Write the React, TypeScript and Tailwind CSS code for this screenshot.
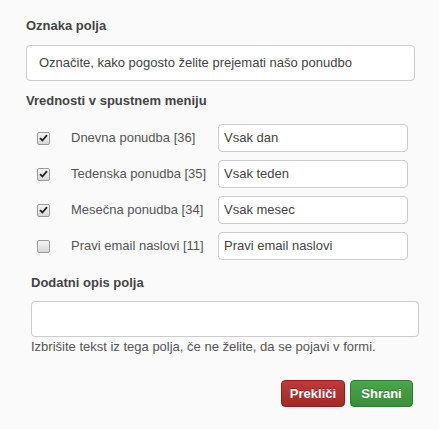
import React from "react";

const rows = [
  { label: "Dnevna ponudba [36]", value: "Vsak dan", checked: true },
  { label: "Tedenska ponudba [35]", value: "Vsak teden", checked: true },
  { label: "Mesečna ponudba [34]", value: "Vsak mesec", checked: true },
  { label: "Pravi email naslovi [11]", value: "Pravi email naslovi", checked: false },
];

function Check({ checked }: { checked: boolean }) {
  return (
    <span className="flex h-[13px] w-[13px] items-center justify-center rounded-[2px] border border-[#9a9a9a] bg-gradient-to-b from-[#f4f4f4] to-[#d8d8d8]">
      {checked && (
        <svg width="9" height="8" viewBox="0 0 9 8">
          <path d="M1 4.2 L3.4 6.5 L8 1.2" fill="none" stroke="#222" strokeWidth="1.8" />
        </svg>
      )}
    </span>
  );
}

export default function App() {
  return (
    <div className="w-[439px] h-[429px] bg-[#fafafa] text-[13px] text-[#555] font-['Liberation_Sans',Arial,sans-serif]">
      <div className="px-[26px] pt-[18px]">
        <p className="font-bold leading-[16px] text-[#444]">Oznaka polja</p>
        <div className="mt-[11px] flex h-[36px] w-[389px] items-center rounded-[4px] border border-[#ccc] bg-white px-[12px] text-[#444]">
          Označite, kako pogosto želite prejemati našo ponudbo
        </div>
        <p className="mt-[12px] font-bold leading-[16px] text-[#444]">Vrednosti v spustnem meniju</p>

        <div className="mt-[15px] flex flex-col gap-[8px]">
          {rows.map((r) => (
            <div key={r.label} className="flex h-[28px] items-center">
              <div className="w-[45px] pl-[11px]">
                <Check checked={r.checked} />
              </div>
              <span className="w-[147px] text-[#555]">{r.label}</span>
              <div className="flex h-[28px] w-[190px] items-center rounded-[4px] border border-[#ccc] bg-white px-[5px] text-[#444]">
                {r.value}
              </div>
            </div>
          ))}
        </div>
      </div>

      <div className="pl-[31px] pr-[20px]">
        <p className="mt-[15px] font-bold leading-[16px] text-[#444]">Dodatni opis polja</p>
        <div className="mt-[10px] h-[36px] w-[388px] rounded-[4px] border border-[#ccc] bg-white" />
        <p className="mt-[2px] leading-[16px] text-[#555]">
          Izbrišite tekst iz tega polja, če ne želite, da se pojavi v formi.
        </p>
      </div>

      <div className="mt-[25px] flex justify-end gap-[5px] pr-[26px]">
        <button className="h-[27px] w-[64px] rounded-[4px] border border-[#8f1f1c] bg-gradient-to-b from-[#c0393a] to-[#a22a27] font-bold text-white [text-shadow:0_-1px_0_rgba(0,0,0,0.25)]">
          Prekliči
        </button>
        <button className="h-[27px] w-[63px] rounded-[4px] border border-[#2f7a2f] bg-gradient-to-b from-[#4aa64a] to-[#3a8f3a] font-bold text-white [text-shadow:0_-1px_0_rgba(0,0,0,0.25)]">
          Shrani
        </button>
      </div>
    </div>
  );
}
